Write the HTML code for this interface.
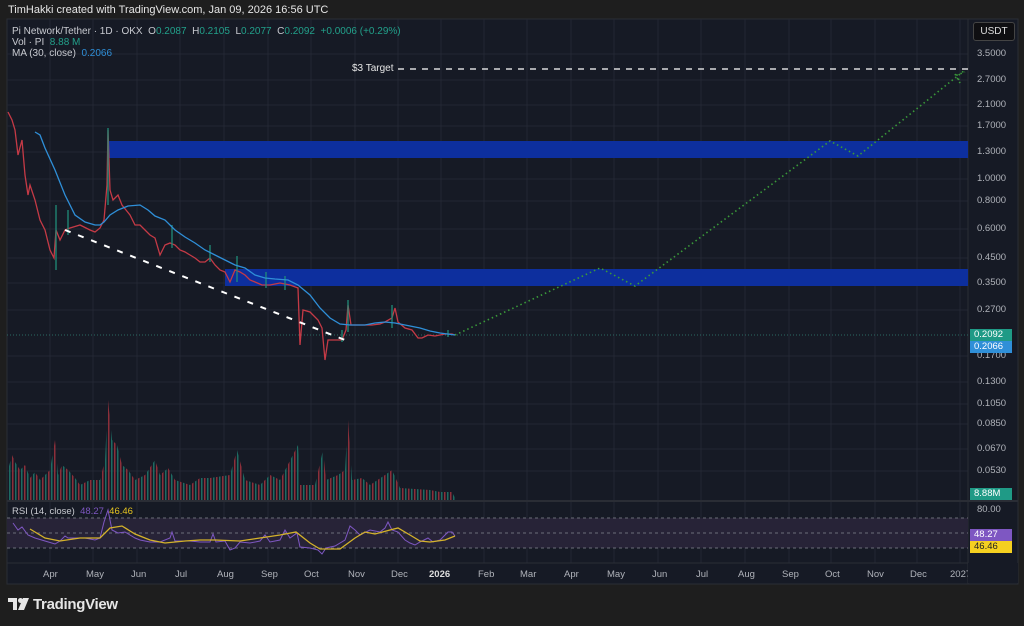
<!DOCTYPE html><html><head><meta charset="utf-8"><style>
body{margin:0;width:1024px;height:626px;background:#1e1e1e;font-family:"Liberation Sans",sans-serif;overflow:hidden;position:relative}
.t{position:absolute;white-space:nowrap}
</style></head><body>
<div class="t" style="left:8px;top:4px;font-size:11px;color:#e6e6e6">TimHakki created with TradingView.com, Jan 09, 2026 16:56 UTC</div>
<svg width="1024" height="626" style="position:absolute;left:0;top:0">
<defs>
<pattern id="vp" width="6" height="120" patternUnits="userSpaceOnUse">
<rect x="0" y="0" width="1.5" height="120" fill="#8c2f3a"/><rect x="3" y="0" width="1.5" height="120" fill="#1d6b62"/>
</pattern>
</defs>
<rect x="7" y="19" width="1011" height="565" fill="#161a25" stroke="#2a2d35"/>
<g stroke="#232734" stroke-width="1">
<line x1="50" y1="19" x2="50" y2="563"/><line x1="93" y1="19" x2="93" y2="563"/><line x1="137" y1="19" x2="137" y2="563"/><line x1="180" y1="19" x2="180" y2="563"/><line x1="224" y1="19" x2="224" y2="563"/><line x1="268" y1="19" x2="268" y2="563"/><line x1="311" y1="19" x2="311" y2="563"/><line x1="355" y1="19" x2="355" y2="563"/><line x1="398" y1="19" x2="398" y2="563"/><line x1="441" y1="19" x2="441" y2="563"/><line x1="484" y1="19" x2="484" y2="563"/><line x1="527" y1="19" x2="527" y2="563"/><line x1="571" y1="19" x2="571" y2="563"/><line x1="614" y1="19" x2="614" y2="563"/><line x1="658" y1="19" x2="658" y2="563"/><line x1="701" y1="19" x2="701" y2="563"/><line x1="745" y1="19" x2="745" y2="563"/><line x1="789" y1="19" x2="789" y2="563"/><line x1="831" y1="19" x2="831" y2="563"/><line x1="875" y1="19" x2="875" y2="563"/><line x1="917" y1="19" x2="917" y2="563"/><line x1="960" y1="19" x2="960" y2="563"/>
<line x1="7" y1="54" x2="968" y2="54"/><line x1="7" y1="80" x2="968" y2="80"/><line x1="7" y1="105" x2="968" y2="105"/><line x1="7" y1="126" x2="968" y2="126"/><line x1="7" y1="152" x2="968" y2="152"/><line x1="7" y1="179" x2="968" y2="179"/><line x1="7" y1="201" x2="968" y2="201"/><line x1="7" y1="229" x2="968" y2="229"/><line x1="7" y1="258" x2="968" y2="258"/><line x1="7" y1="283" x2="968" y2="283"/><line x1="7" y1="310" x2="968" y2="310"/><line x1="7" y1="356" x2="968" y2="356"/><line x1="7" y1="382" x2="968" y2="382"/><line x1="7" y1="404" x2="968" y2="404"/><line x1="7" y1="424" x2="968" y2="424"/><line x1="7" y1="449" x2="968" y2="449"/><line x1="7" y1="471" x2="968" y2="471"/>
</g>
<line x1="968" y1="19" x2="968" y2="584" stroke="#2a2d35"/>
<line x1="7" y1="501" x2="1018" y2="501" stroke="#2a2d35" stroke-width="2"/>
<line x1="7" y1="563" x2="968" y2="563" stroke="#2a2d35"/>
<rect x="108" y="141" width="860" height="17" fill="#0d2f9e"/>
<rect x="225" y="269" width="743" height="17" fill="#0d2f9e"/>
<line x1="7" y1="335" x2="968" y2="335" stroke="#2b6a64" stroke-dasharray="1 2"/>
<polygon fill="url(#vp)" points="8,470 12,455 15,462 20,470 25,465 30,478 35,472 40,480 50,470 55,440 58,475 62,465 68,470 75,478 80,485 90,480 100,480 105,460 108,400 112,440 117,445 122,465 128,470 135,480 145,475 155,460 160,475 168,468 175,480 190,485 200,478 210,478 230,475 237,450 245,480 260,485 270,475 280,480 298,445 300,485 315,485 323,450 326,480 338,475 345,470 348,420 352,480 362,478 370,485 385,475 392,470 400,488 430,490 440,492 452,492 455,498 455,500 8,500"/>
<polyline fill="none" stroke="#c53a46" stroke-width="1.3" points="8,112 12,120 15,130 18,155 22,140 25,175 28,195 30,185 35,200 40,220 45,230 50,250 54,258 56,230 60,240 65,230 70,228 80,225 90,230 95,232 100,228 104,220 107,185 108,130 110,190 113,200 118,195 122,205 126,210 130,215 135,225 140,225 145,230 150,235 155,238 160,255 165,245 170,243 175,245 180,250 185,252 190,255 195,258 200,262 205,262 210,258 215,265 220,270 225,272 230,282 235,270 240,272 245,275 250,280 255,282 262,285 270,285 280,283 290,285 298,288 300,345 303,310 310,312 318,320 322,328 325,360 328,340 335,340 342,340 346,330 348,305 351,325 356,325 365,325 372,325 380,324 385,322 392,318 395,308 398,322 405,328 412,330 418,338 422,338 428,335 435,336 445,334 452,334 455,335"/>
<g stroke="#1f8c78" stroke-width="1.3">
<line x1="56" y1="205" x2="56" y2="270"/><line x1="108" y1="128" x2="108" y2="205"/><line x1="68" y1="210" x2="68" y2="235"/><line x1="172" y1="225" x2="172" y2="248"/><line x1="210" y1="245" x2="210" y2="262"/><line x1="237" y1="256" x2="237" y2="282"/><line x1="266" y1="272" x2="266" y2="288"/><line x1="285" y1="276" x2="285" y2="290"/><line x1="348" y1="300" x2="348" y2="332"/><line x1="392" y1="305" x2="392" y2="328"/><line x1="342" y1="330" x2="342" y2="342"/><line x1="448" y1="330" x2="448" y2="337"/>
</g>
<polyline fill="none" stroke="#2f8fd8" stroke-width="1.3" points="35,132 40,135 45,148 55,170 65,195 75,215 85,222 95,225 100,225 104,222 110,215 118,210 128,206 140,205 148,210 155,216 165,220 175,230 185,237 195,243 205,250 215,255 225,260 235,265 245,268 255,275 265,278 275,279 288,280 298,285 310,295 320,308 330,318 340,324 350,325 365,325 375,323 385,322 395,323 405,325 420,328 430,331 440,333 455,335"/>
<line x1="65" y1="230" x2="345" y2="340" stroke="#fff" stroke-width="2" stroke-dasharray="6 8"/>
<line x1="398" y1="69" x2="968" y2="69" stroke="#fff" stroke-width="1.3" stroke-dasharray="6 6"/>
<polyline fill="none" stroke="#3a9a3a" stroke-width="1.6" stroke-dasharray="1.5 3" points="455,335 600,268 635,286 830,141 858,156 965,70"/>
<polyline fill="none" stroke="#3a9a3a" stroke-width="1.6" stroke-dasharray="1.5 3" points="955,74 960,83 957,75 965,72"/>
<rect x="7" y="518" width="961" height="30" fill="#272337"/>
<g stroke="#6b6e78" stroke-dasharray="3 3"><line x1="7" y1="518" x2="968" y2="518"/><line x1="7" y1="533" x2="968" y2="533"/><line x1="7" y1="548" x2="968" y2="548"/></g>
<polyline fill="none" stroke="#7e57c2" stroke-width="1" points="13,523 18,530 22,527 28,535 35,538 45,541 55,544 60,541 65,536 68,538 75,538 85,538 95,540 100,538 104,522 108,510 112,530 118,533 125,532 130,535 135,538 140,540 150,542 160,542 170,538 172,532 175,541 190,541 200,542 210,542 213,534 216,542 225,541 230,550 235,548 240,542 250,543 260,541 265,535 270,542 280,540 285,530 290,538 297,533 300,547 310,548 318,550 322,554 326,548 335,546 345,540 350,526 355,530 360,535 370,530 380,532 385,528 388,522 392,530 398,532 405,540 410,543 415,545 420,542 428,538 433,542 440,540 448,532 452,532 455,536"/>
<polyline fill="none" stroke="#d4b22a" stroke-width="1.3" points="30,529 45,538 60,541 80,538 100,538 110,528 122,526 135,534 150,540 165,543 185,541 200,540 215,540 240,541 260,538 280,535 296,532 310,543 320,549 340,549 355,538 365,532 375,534 390,530 398,528 410,535 420,541 430,542 445,540 455,536"/>
</svg>
<div class="t" style="left:12px;top:26px;font-size:10px;color:#c8cad0">Pi Network/Tether · 1D · OKX &nbsp;O<span style="color:#22a08a">0.2087</span> &nbsp;H<span style="color:#22a08a">0.2105</span> &nbsp;L<span style="color:#22a08a">0.2077</span> &nbsp;C<span style="color:#22a08a">0.2092 &nbsp;+0.0006 (+0.29%)</span></div>
<div class="t" style="left:12px;top:37px;font-size:10px;color:#c8cad0">Vol · PI &nbsp;<span style="color:#22a08a">8.88 M</span></div>
<div class="t" style="left:12px;top:48px;font-size:10px;color:#c8cad0">MA (30, close) &nbsp;<span style="color:#2f8fd8">0.2066</span></div>
<div class="t" style="left:352px;top:63px;font-size:10px;color:#e6e6e6">$3 Target</div>
<div class="t" style="left:973px;top:22px;width:40px;height:17px;border:1px solid #444;border-radius:3px;background:#0f0f12;color:#ddd;font-size:10px;line-height:17px;text-align:center">USDT</div>
<div style="position:absolute;left:977px;top:0;font-size:9.5px;color:#b0b3ba;line-height:1">
<div class="t" style="top:49px">3.5000</div><div class="t" style="top:75px">2.7000</div><div class="t" style="top:100px">2.1000</div><div class="t" style="top:121px">1.7000</div><div class="t" style="top:147px">1.3000</div><div class="t" style="top:174px">1.0000</div><div class="t" style="top:196px">0.8000</div><div class="t" style="top:224px">0.6000</div><div class="t" style="top:253px">0.4500</div><div class="t" style="top:278px">0.3500</div><div class="t" style="top:305px">0.2700</div><div class="t" style="top:351px">0.1700</div><div class="t" style="top:377px">0.1300</div><div class="t" style="top:399px">0.1050</div><div class="t" style="top:419px">0.0850</div><div class="t" style="top:444px">0.0670</div><div class="t" style="top:466px">0.0530</div><div class="t" style="top:505px">80.00</div>
</div>
<div class="t" style="left:970px;top:329px;width:38px;height:12px;background:#1f9a86;color:#fff;font-size:9.5px;line-height:12px;padding-left:4px">0.2092</div>
<div class="t" style="left:970px;top:341px;width:38px;height:12px;background:#2f8fd8;color:#fff;font-size:9.5px;line-height:12px;padding-left:4px">0.2066</div>
<div class="t" style="left:970px;top:488px;width:38px;height:12px;background:#1f9a86;color:#fff;font-size:9.5px;line-height:12px;padding-left:4px">8.88M</div>
<div class="t" style="left:970px;top:529px;width:38px;height:12px;background:#7e57c2;color:#fff;font-size:9.5px;line-height:12px;padding-left:4px">48.27</div>
<div class="t" style="left:970px;top:541px;width:38px;height:12px;background:#f5d020;color:#222;font-size:9.5px;line-height:12px;padding-left:4px">46.46</div>
<div class="t" style="left:12px;top:506px;font-size:9.5px;color:#c8cad0">RSI (14, close) &nbsp;<span style="color:#7e57c2">48.27</span> &nbsp;<span style="color:#e5c420">46.46</span></div>
<div style="position:absolute;left:0;top:569px;font-size:9.5px;color:#b0b3ba">
<span class="t" style="left:43px">Apr</span><span class="t" style="left:86px">May</span><span class="t" style="left:131px">Jun</span><span class="t" style="left:175px">Jul</span><span class="t" style="left:217px">Aug</span><span class="t" style="left:261px">Sep</span><span class="t" style="left:304px">Oct</span><span class="t" style="left:348px">Nov</span><span class="t" style="left:391px">Dec</span><span class="t" style="left:429px;color:#ddd;font-weight:bold">2026</span><span class="t" style="left:478px">Feb</span><span class="t" style="left:520px">Mar</span><span class="t" style="left:564px">Apr</span><span class="t" style="left:607px">May</span><span class="t" style="left:652px">Jun</span><span class="t" style="left:696px">Jul</span><span class="t" style="left:738px">Aug</span><span class="t" style="left:782px">Sep</span><span class="t" style="left:825px">Oct</span><span class="t" style="left:867px">Nov</span><span class="t" style="left:910px">Dec</span><span class="t" style="left:950px">2027</span>
</div>
<div style="position:absolute;left:968px;top:563px;width:50px;height:20px;background:#161a25"></div>
<svg style="position:absolute;left:8px;top:598px" width="24" height="14"><path d="M0 0h9v12h-4v-8h-5z M10 12l5-12h6l-5 12z" fill="#e6e6e6"/><circle cx="12.5" cy="2.5" r="2.5" fill="#e6e6e6"/></svg>
<div class="t" style="left:33px;top:596px;font-size:15px;color:#e6e6e6;font-weight:bold;letter-spacing:-0.3px">TradingView</div>
</body></html>
